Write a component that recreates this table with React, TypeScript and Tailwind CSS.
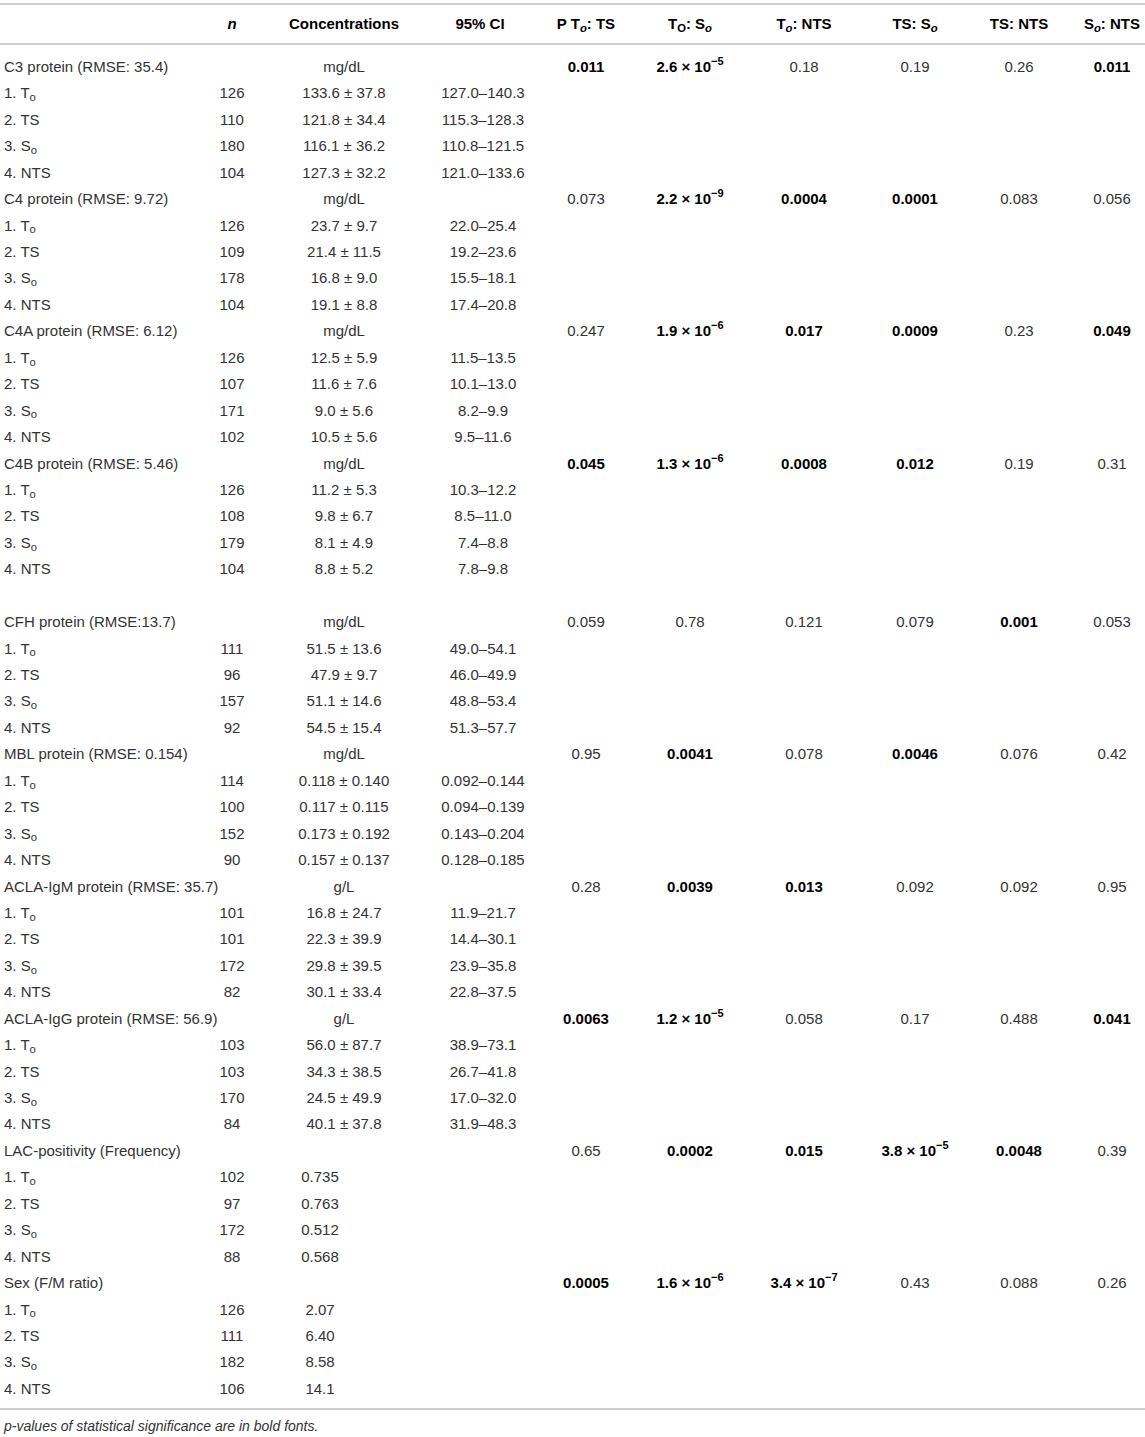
import React from 'react';

type P = { v: string; e?: string; b?: boolean };
type Row = { label: React.ReactNode; n: string; c: string; ci?: string };
type Group = { label: string; unit?: string; p: P[]; rows: Row[]; single?: boolean; gapBefore?: boolean };

const To = () => (
  <>
    T<sub>o</sub>
  </>
);
const So = () => (
  <>
    S<sub>o</sub>
  </>
);

const lbl = [
  <>1. <To /></>,
  <>2. TS</>,
  <>3. <So /></>,
  <>4. NTS</>,
];

const mk = (vals: [string, string, string?][]): Row[] =>
  vals.map((v, i) => ({ label: lbl[i], n: v[0], c: v[1], ci: v[2] }));

const groups: Group[] = [
  {
    label: 'C3 protein (RMSE: 35.4)',
    unit: 'mg/dL',
    p: [{ v: '0.011', b: true }, { v: '2.6', e: '5', b: true }, { v: '0.18' }, { v: '0.19' }, { v: '0.26' }, { v: '0.011', b: true }],
    rows: mk([
      ['126', '133.6 ± 37.8', '127.0–140.3'],
      ['110', '121.8 ± 34.4', '115.3–128.3'],
      ['180', '116.1 ± 36.2', '110.8–121.5'],
      ['104', '127.3 ± 32.2', '121.0–133.6'],
    ]),
  },
  {
    label: 'C4 protein (RMSE: 9.72)',
    unit: 'mg/dL',
    p: [{ v: '0.073' }, { v: '2.2', e: '9', b: true }, { v: '0.0004', b: true }, { v: '0.0001', b: true }, { v: '0.083' }, { v: '0.056' }],
    rows: mk([
      ['126', '23.7 ± 9.7', '22.0–25.4'],
      ['109', '21.4 ± 11.5', '19.2–23.6'],
      ['178', '16.8 ± 9.0', '15.5–18.1'],
      ['104', '19.1 ± 8.8', '17.4–20.8'],
    ]),
  },
  {
    label: 'C4A protein (RMSE: 6.12)',
    unit: 'mg/dL',
    p: [{ v: '0.247' }, { v: '1.9', e: '6', b: true }, { v: '0.017', b: true }, { v: '0.0009', b: true }, { v: '0.23' }, { v: '0.049', b: true }],
    rows: mk([
      ['126', '12.5 ± 5.9', '11.5–13.5'],
      ['107', '11.6 ± 7.6', '10.1–13.0'],
      ['171', '9.0 ± 5.6', '8.2–9.9'],
      ['102', '10.5 ± 5.6', '9.5–11.6'],
    ]),
  },
  {
    label: 'C4B protein (RMSE: 5.46)',
    unit: 'mg/dL',
    p: [{ v: '0.045', b: true }, { v: '1.3', e: '6', b: true }, { v: '0.0008', b: true }, { v: '0.012', b: true }, { v: '0.19' }, { v: '0.31' }],
    rows: mk([
      ['126', '11.2 ± 5.3', '10.3–12.2'],
      ['108', '9.8 ± 6.7', '8.5–11.0'],
      ['179', '8.1 ± 4.9', '7.4–8.8'],
      ['104', '8.8 ± 5.2', '7.8–9.8'],
    ]),
  },
  {
    label: 'CFH protein (RMSE:13.7)',
    unit: 'mg/dL',
    gapBefore: true,
    p: [{ v: '0.059' }, { v: '0.78' }, { v: '0.121' }, { v: '0.079' }, { v: '0.001', b: true }, { v: '0.053' }],
    rows: mk([
      ['111', '51.5 ± 13.6', '49.0–54.1'],
      ['96', '47.9 ± 9.7', '46.0–49.9'],
      ['157', '51.1 ± 14.6', '48.8–53.4'],
      ['92', '54.5 ± 15.4', '51.3–57.7'],
    ]),
  },
  {
    label: 'MBL protein (RMSE: 0.154)',
    unit: 'mg/dL',
    p: [{ v: '0.95' }, { v: '0.0041', b: true }, { v: '0.078' }, { v: '0.0046', b: true }, { v: '0.076' }, { v: '0.42' }],
    rows: mk([
      ['114', '0.118 ± 0.140', '0.092–0.144'],
      ['100', '0.117 ± 0.115', '0.094–0.139'],
      ['152', '0.173 ± 0.192', '0.143–0.204'],
      ['90', '0.157 ± 0.137', '0.128–0.185'],
    ]),
  },
  {
    label: 'ACLA-IgM protein (RMSE: 35.7)',
    unit: 'g/L',
    p: [{ v: '0.28' }, { v: '0.0039', b: true }, { v: '0.013', b: true }, { v: '0.092' }, { v: '0.092' }, { v: '0.95' }],
    rows: mk([
      ['101', '16.8 ± 24.7', '11.9–21.7'],
      ['101', '22.3 ± 39.9', '14.4–30.1'],
      ['172', '29.8 ± 39.5', '23.9–35.8'],
      ['82', '30.1 ± 33.4', '22.8–37.5'],
    ]),
  },
  {
    label: 'ACLA-IgG protein (RMSE: 56.9)',
    unit: 'g/L',
    p: [{ v: '0.0063', b: true }, { v: '1.2', e: '5', b: true }, { v: '0.058' }, { v: '0.17' }, { v: '0.488' }, { v: '0.041', b: true }],
    rows: mk([
      ['103', '56.0 ± 87.7', '38.9–73.1'],
      ['103', '34.3 ± 38.5', '26.7–41.8'],
      ['170', '24.5 ± 49.9', '17.0–32.0'],
      ['84', '40.1 ± 37.8', '31.9–48.3'],
    ]),
  },
  {
    label: 'LAC-positivity (Frequency)',
    single: true,
    p: [{ v: '0.65' }, { v: '0.0002', b: true }, { v: '0.015', b: true }, { v: '3.8', e: '5', b: true }, { v: '0.0048', b: true }, { v: '0.39' }],
    rows: mk([
      ['102', '0.735'],
      ['97', '0.763'],
      ['172', '0.512'],
      ['88', '0.568'],
    ]),
  },
  {
    label: 'Sex (F/M ratio)',
    single: true,
    p: [{ v: '0.0005', b: true }, { v: '1.6', e: '6', b: true }, { v: '3.4', e: '7', b: true }, { v: '0.43' }, { v: '0.088' }, { v: '0.26' }],
    rows: mk([
      ['126', '2.07'],
      ['111', '6.40'],
      ['182', '8.58'],
      ['106', '14.1'],
    ]),
  },
];

const grid =
  'grid grid-cols-[200px_64px_160px_112px_100px_108px_120px_102px_106px_73px] items-center';

function PVal({ p }: { p: P }) {
  return (
    <span className={p.b ? 'font-bold text-black' : ''}>
      {p.e ? (
        <>
          {p.v} × 10<sup className="text-[11px] -top-[7px]">−{p.e}</sup>
        </>
      ) : (
        p.v
      )}
    </span>
  );
}

export default function App() {
  return (
    <div
      className="w-[1145px] bg-white pt-[3px] text-[15px] text-[#333]"
      style={{ fontFamily: '"Liberation Sans", Arial, Helvetica, sans-serif' }}
    >
      {/* Header */}
      <div className={`${grid} h-[42px] border-y-2 border-[#cdcdcd] font-bold text-black text-center`}>
        <div />
        <div className="italic">n</div>
        <div>Concentrations</div>
        <div>95% CI</div>
        <div>
          P T<sub className="italic">o</sub>: TS
        </div>
        <div>
          T<sub>O</sub>: S<sub className="italic">o</sub>
        </div>
        <div>
          T<sub className="italic">o</sub>: NTS
        </div>
        <div>
          TS: S<sub className="italic">o</sub>
        </div>
        <div>TS: NTS</div>
        <div className="pl-[7px]">
          S<sub className="italic">o</sub>: NTS
        </div>
      </div>

      {/* Body */}
      <div className="pt-[9px]">
        {groups.map((g, gi) => (
          <React.Fragment key={gi}>
            {g.gapBefore && <div className="h-[26.45px]" />}
            <div className={`${grid} h-[26.45px] text-center`}>
              <div className="pl-[4px] text-left whitespace-nowrap">{g.label}</div>
              <div />
              <div>{g.unit}</div>
              <div />
              {g.p.map((p, i) => (
                <div key={i} className={i === 5 ? 'pl-[7px]' : ''}>
                  <PVal p={p} />
                </div>
              ))}
            </div>
            {g.rows.map((r, ri) => (
              <div key={ri} className={`${grid} h-[26.45px] text-center`}>
                <div className="pl-[4px] text-left">{r.label}</div>
                <div>{r.n}</div>
                <div className={g.single ? 'pr-[48px]' : ''}>{r.c}</div>
                <div className="pl-[6px]">{r.ci}</div>
                <div />
                <div />
                <div />
                <div />
                <div />
                <div />
              </div>
            ))}
          </React.Fragment>
        ))}
      </div>

      {/* Footnote */}
      <div className="mt-[6px] border-t-2 border-[#cdcdcd] pl-[4px] pt-[6px] text-[14px] leading-[20px] italic">
        p-values of statistical significance are in bold fonts.
      </div>
    </div>
  );
}
